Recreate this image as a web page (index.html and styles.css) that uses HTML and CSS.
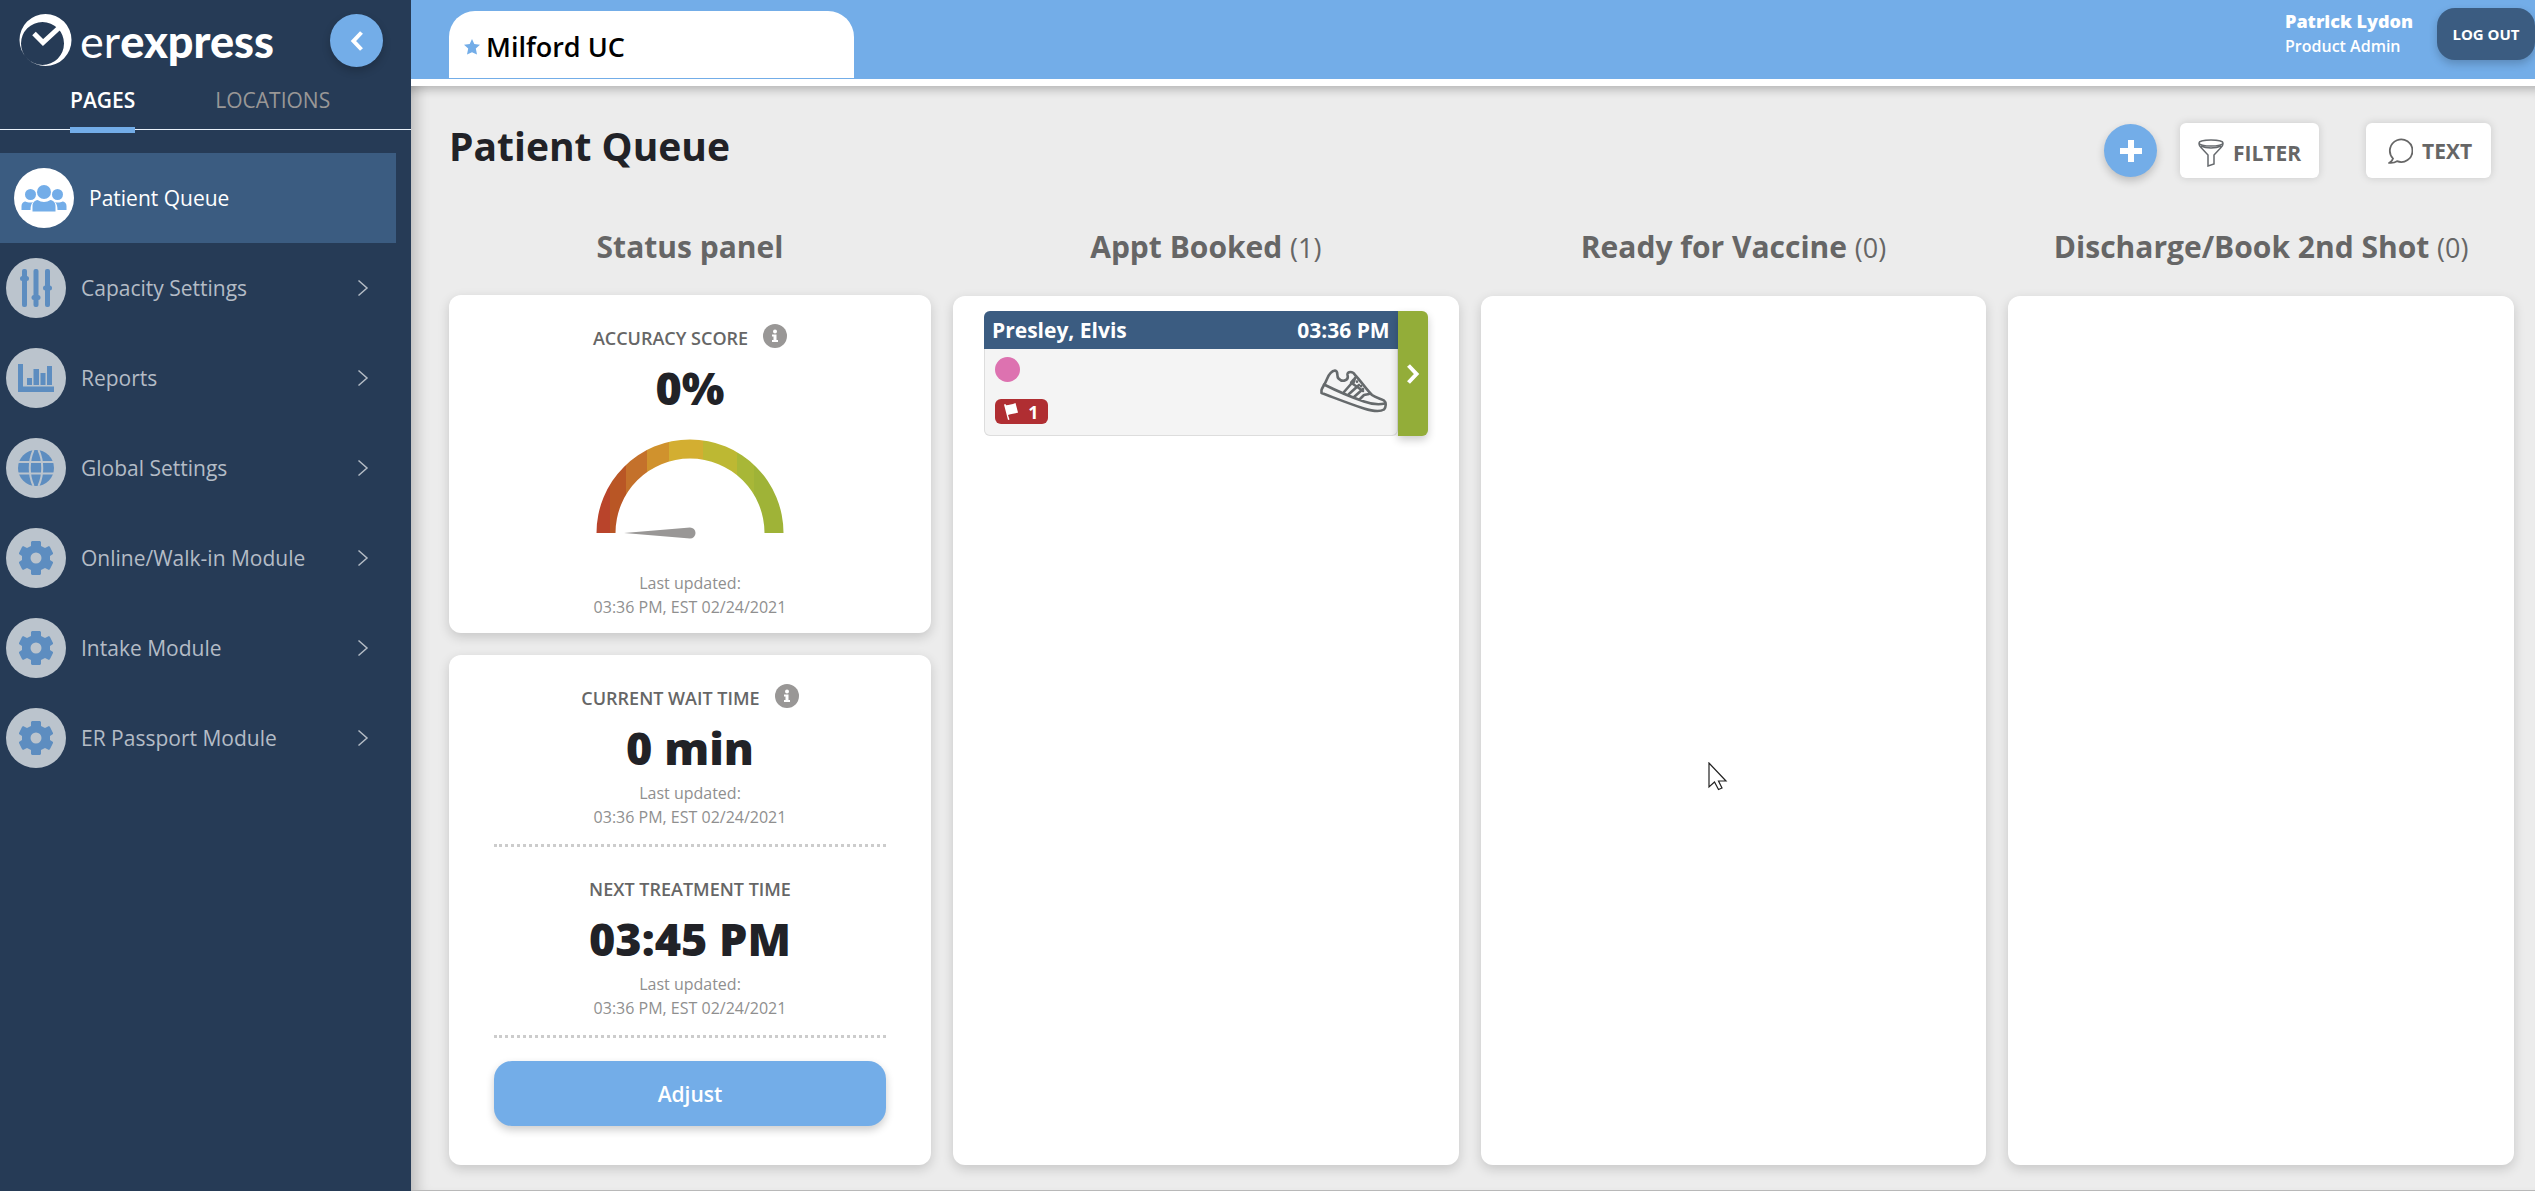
FILE: index.html
```html
<!DOCTYPE html>
<html lang="en">
<head>
<meta charset="utf-8">
<meta name="viewport" content="width=device-width, initial-scale=1">
<title>Patient Queue</title>
<link rel="stylesheet" href="styles.css">
</head>
<body>
<svg class="sprite" aria-hidden="true">
  <symbol id="gear" viewBox="0 0 36 36">
    <path fill-rule="evenodd" d="M14 1h8l1 1v4l4 2 4-2 1 1 3 6v1l-3 2v4l3 2v1l-3 6-1 1-4-2-4 2v4l-1 1h-8l-1-1v-4l-4-2-4 2-1-1-3-6v-1l3-2v-4l-3-2v-1l3-6 1-1 4 2 4-2V2zM18 12.500a5.500 5.500 0 1 0 0 11a5.500 5.500 0 0 0 0-11z"/>
  </symbol>
  <symbol id="chevron" viewBox="0 0 12 18">
    <path d="M1.500 1.500L10 9l-8.500 7.500" fill="none" stroke="currentColor" stroke-width="1.500"/>
  </symbol>
  <symbol id="info" viewBox="0 0 24 24">
    <circle cx="12" cy="12" r="12" fill="#999796"/>
    <circle cx="12" cy="7.500" r="2" fill="#fff"/>
    <path d="M9 10.500h4.500v5.500H15v2H9v-2h1.500v-3.500H9z" fill="#fff"/>
  </symbol>
</svg>

<div class="app">
  <aside class="sidebar">
    <div class="brand">
      <a class="logo" href="#">
        <svg width="53" height="53" viewBox="0 0 53 53">
          <path fill="#fff" fill-rule="evenodd" d="M26.500 0a26 26 0 1 1 0 52a26 26 0 1 1 0-52zM23.500 8a21.500 21.500 0 1 0 0 43a21.500 21.500 0 1 0 0-43z"/>
          <path fill="none" stroke="#fff" stroke-width="5" d="M15 19.500l9 9L42 12"/>
        </svg>
        <span class="logo-text">er<b>express</b></span>
      </a>
      <button class="round-btn" type="button" aria-label="Collapse menu">
        <svg width="14" height="22" viewBox="0 0 14 22"><path d="M11.500 2.500L3.500 11l8 8.500" fill="none" stroke="#fff" stroke-width="4"/></svg>
      </button>
    </div>
    <div class="side-tabs">
      <a class="side-tab current" href="#">PAGES</a>
      <a class="side-tab" href="#">LOCATIONS</a>
    </div>
    <nav class="menu">
      <a class="item active" href="#">
        <span class="disc"><svg width="46" height="28" viewBox="0 0 46 28">
          <circle cx="23" cy="8" r="7"/><circle cx="9.500" cy="10.500" r="5.500"/><circle cx="36.500" cy="10.500" r="5.500"/>
          <path d="M11.500 27.500v-5c0-4 2-6 5-6.500 4 2.500 9 2.500 13 0 3 .5 5 2.500 5 6.500v5zM.5 26v-4c0-3 2-4.500 4-4.500 2 1 5 1.500 7.500.5-1.500 1.500-2.500 4-2.500 8zM45.500 26v-4c0-3-2-4.500-4-4.500-2 1-5 1.500-7.500.5 1.500 1.500 2.500 4 2.500 8z"/>
        </svg></span>
        <span class="label">Patient Queue</span>
      </a>
      <a class="item" href="#">
        <span class="disc"><svg width="32" height="38" viewBox="0 0 32 38">
          <rect x="2" y="0" width="5" height="38" rx="2"/><rect x="13.500" y="0" width="5" height="38" rx="2"/><rect x="25" y="0" width="5" height="38" rx="2"/>
          <rect x="0" y="7" width="9" height="5" rx="2.500"/><rect x="11.500" y="26" width="9" height="5" rx="2.500"/><rect x="23" y="16.500" width="9" height="5" rx="2.500"/>
        </svg></span>
        <span class="label">Capacity Settings</span>
        <svg class="chev" width="12" height="18"><use href="#chevron"/></svg>
      </a>
      <a class="item" href="#">
        <span class="disc"><svg width="36" height="28" viewBox="0 0 36 28">
          <path d="M0 0h5v22.500h31V28H0zM9 14h5v7H9zM15.500 5h5.500v16h-5.500zM22.500 9h5v12h-5zM29 2h5v19h-5z"/>
        </svg></span>
        <span class="label">Reports</span>
        <svg class="chev" width="12" height="18"><use href="#chevron"/></svg>
      </a>
      <a class="item" href="#">
        <span class="disc"><svg width="36" height="36" viewBox="0 0 36 36">
          <circle cx="18" cy="18" r="18"/>
          <path d="M0 12h36M0 23.500h36M15.500 0c-5 11-5 25 0 36M20.500 0c5 11 5 25 0 36" fill="none" stroke="#bbc4cd" stroke-width="2"/>
        </svg></span>
        <span class="label">Global Settings</span>
        <svg class="chev" width="12" height="18"><use href="#chevron"/></svg>
      </a>
      <a class="item" href="#">
        <span class="disc"><svg width="36" height="36"><use href="#gear"/></svg></span>
        <span class="label">Online/Walk-in Module</span>
        <svg class="chev" width="12" height="18"><use href="#chevron"/></svg>
      </a>
      <a class="item" href="#">
        <span class="disc"><svg width="36" height="36"><use href="#gear"/></svg></span>
        <span class="label">Intake Module</span>
        <svg class="chev" width="12" height="18"><use href="#chevron"/></svg>
      </a>
      <a class="item" href="#">
        <span class="disc"><svg width="36" height="36"><use href="#gear"/></svg></span>
        <span class="label">ER Passport Module</span>
        <svg class="chev" width="12" height="18"><use href="#chevron"/></svg>
      </a>
    </nav>
  </aside>

  <div class="content">
    <header class="topbar">
      <a class="loc-tab" href="#">
        <svg width="16" height="16" viewBox="0 0 16 16"><path fill="#73ade8" d="M8 0l2.300 5 5.700.7-4.200 3.800 1.200 6L8 13.200 3 15.500l1.200-6L0 5.700 5.700 5z"/></svg>
        Milford UC
      </a>
      <div class="account">
        <div class="user"><span class="user-name">Patrick Lydon</span><span>Product Admin</span></div>
        <button class="logout" type="button">LOG OUT</button>
      </div>
    </header>

    <main class="main">
      <div class="title-row">
        <h1>Patient Queue</h1>
        <div class="actions">
          <button class="round-btn add" type="button" aria-label="Add patient">
            <svg width="22" height="22" viewBox="0 0 22 22"><path d="M8 0h6v8h8v6h-8v8H8v-8H0V8h8z" fill="#fff"/></svg>
          </button>
          <button class="tool filter" type="button">
            <svg width="26" height="28" viewBox="0 0 26 28" fill="none" stroke="#666a6e" stroke-width="1.500"><ellipse cx="13" cy="4" rx="12" ry="3"/><path d="M1 4.500c0 2 1 3 2 4l7 7.500v11l6-2v-9l7-7.500c1-1 2-2 2-4M3 7c5 2.500 15 2.500 20 0"/></svg>
            FILTER
          </button>
          <button class="tool text" type="button">
            <svg width="25" height="26" viewBox="0 0 25 26" fill="none" stroke="#666" stroke-width="1.800"><path d="M5 20.500A11.300 11.300 0 1 1 9 23.200C7 24.500 4 25 1.500 24.800 3.500 23.500 4.500 22.500 5 20.500z"/></svg>
            TEXT
          </button>
        </div>
      </div>

      <div class="board">
        <section class="col">
          <h2>Status panel</h2>
          <div class="card stat">
            <h3>ACCURACY SCORE <svg width="24" height="24"><use href="#info"/></svg></h3>
            <p class="value">0%</p>
            <svg class="gauge" width="188" height="100" viewBox="0 0 188 100">
              <defs><linearGradient id="scale" gradientUnits="userSpaceOnUse" x1="0" y1="0" x2="188" y2="0">
                <stop offset=".075" stop-color="#b9442b"/><stop offset=".075" stop-color="#b95625"/>
                <stop offset=".16" stop-color="#b95625"/><stop offset=".16" stop-color="#c4712b"/>
                <stop offset=".272" stop-color="#c4712b"/><stop offset=".272" stop-color="#d0922d"/>
                <stop offset=".39" stop-color="#d0922d"/><stop offset=".39" stop-color="#d3ae31"/>
                <stop offset=".57" stop-color="#d3ae31"/><stop offset=".57" stop-color="#bdb833"/>
                <stop offset=".75" stop-color="#bdb833"/><stop offset=".75" stop-color="#a8b737"/>
                <stop offset=".84" stop-color="#a8b737"/><stop offset=".84" stop-color="#9fb337"/>
              </linearGradient></defs>
              <path fill="url(#scale)" d="M.5 94a93.500 93.500 0 0 1 187 0h-19a74.500 74.500 0 0 0-149 0z"/>
              <path fill="#999796" d="M28 94l66-5.500a5.500 5.500 0 0 1 0 11z"/>
            </svg>
            <p class="updated">Last updated:<br>03:36 PM, EST 02/24/2021</p>
          </div>
          <div class="card stat grow">
            <h3>CURRENT WAIT TIME <svg width="24" height="24"><use href="#info"/></svg></h3>
            <p class="value">0 min</p>
            <p class="updated">Last updated:<br>03:36 PM, EST 02/24/2021</p>
            <hr>
            <h3>NEXT TREATMENT TIME</h3>
            <p class="value">03:45 PM</p>
            <p class="updated">Last updated:<br>03:36 PM, EST 02/24/2021</p>
            <hr>
            <button class="adjust" type="button">Adjust</button>
          </div>
        </section>

        <section class="col">
          <h2>Appt Booked <span>(1)</span></h2>
          <div class="card grow lane">
            <article class="patient">
              <div class="patient-info">
                <div class="patient-head"><span>Presley, Elvis</span><span>03:36 PM</span></div>
                <div class="patient-body">
                  <div class="marks">
                    <span class="dot"></span>
                    <span class="flag"><svg width="14" height="17" viewBox="0 0 14 17"><path fill="#fff" d="M0 1.500l1.500-.5.500 1.200C5 2 8 1.500 11.500 0L14 9.500C11 11 7 10.500 4 12l1.500 4.500-1.500.5z"/></svg>1</span>
                  </div>
                  <svg width="68" height="44" viewBox="0 0 68 44" fill="none" stroke="#666a6c" stroke-width="2.600" stroke-linejoin="round" stroke-linecap="round">
                    <path d="M15 1.500C11 2 9 5 7 10 5 15 2 19 1.500 21v3C15 29 30 35 44 39.500c8 2.500 16 3.500 20 1 2-2 2.500-7 0-9-3-2-8-2.500-12-5.500C46 20 40 11 35 6c-2-4-8-4-7.500 0 1.500 5-4.500 8-9 3.500C16 7 19 2 15 1.500z"/>
                    <path d="M4 15.500C17 22 31 28 44 32.500c7 2.500 15 3.500 21 2M35 9c-1 2-4 3-4 6L24 23M39 16l-10 9M43 20l-9 8M49 25l-5 1-4 4M35 9l-2 6 10 7"/>
                    <path d="M37 12.500v.2M41 17v.2"/>
                  </svg>
                </div>
              </div>
              <button class="advance" type="button" aria-label="Move to next stage">
                <svg width="14" height="22" viewBox="0 0 14 22"><path d="M2.500 2.500L10.500 11l-8 8.500" fill="none" stroke="#fff" stroke-width="4"/></svg>
              </button>
            </article>
          </div>
        </section>

        <section class="col">
          <h2>Ready for Vaccine <span>(0)</span></h2>
          <div class="card grow lane">
            <svg class="pointer" width="20" height="29" viewBox="0 0 20 29"><path fill="#fff" stroke="#222" stroke-width="1.200" d="M1 1v24l5.500-5 4 7.500 3.500-1.500-3.500-7H18z"/></svg>
          </div>
        </section>

        <section class="col">
          <h2>Discharge/Book 2nd Shot <span>(0)</span></h2>
          <div class="card grow lane"></div>
        </section>
      </div>
    </main>
  </div>
</div>
</body>
</html>
```
FILE: styles.css
```css
* { box-sizing: border-box; }
body {
  margin: 0;
  font-family: "Open Sans", "Noto Sans", sans-serif;
  font-size: 16px;
  line-height: 24px;
  color: #212227;
  background: #ececec;
}
h1, h2, h3, p { margin: 0; }
a { color: inherit; text-decoration: none; }
button { font-family: inherit; border: 0; padding: 0; cursor: pointer; }
svg { display: block; flex: none; }
.sprite { position: absolute; width: 0; height: 0; }

.app { display: flex; min-height: 100vh; }

/* Sidebar */
.sidebar { flex: none; width: 411px; background: #263b56; color: #fff; }
.brand { display: flex; justify-content: space-between; align-items: center; padding: 14px 28px 13px 19px; }
.logo { display: flex; align-items: center; gap: 8px; }
.logo-text { font-family: Lato, sans-serif; font-weight: 400; font-size: 45px; line-height: 52px; }
.logo-text b { font-weight: 900; }
.round-btn {
  display: flex; align-items: center; justify-content: center;
  width: 53px; height: 53px; border-radius: 50%;
  background: #73ade8; box-shadow: 0 4px 8px rgba(0, 0, 0, .2);
}
.side-tabs { display: flex; gap: 80px; padding: 0 70px; border-bottom: 1px solid #e9f1fa; }
.side-tab { height: 49px; margin-bottom: -4px; padding-top: 6px; font-size: 21px; line-height: 28px; font-weight: 500; color: #999796; }
.side-tab.current { height: 53px; border-bottom: 6px solid #73ade8; color: #fff; font-weight: 600; }
.menu { padding: 23px 15px 0 0; }
.item { display: flex; align-items: center; gap: 15px; height: 90px; padding: 0 27px 0 6px; font-size: 21px; line-height: 28px; color: #b4bcc6; }
.item.active { padding-left: 14px; background: #3b5c81; color: #fff; }
.disc { flex: none; display: flex; align-items: center; justify-content: center; width: 60px; height: 60px; border-radius: 50%; background: #bbc4cd; fill: #5d8dc0; }
.active .disc { background: #fff; fill: #73ade8; }
.label { flex: 1; }

/* Top bar */
.content { flex: 1; min-width: 0; display: flex; flex-direction: column; }
.topbar { display: flex; justify-content: space-between; align-items: flex-start; height: 86px; padding-left: 38px; background: #73ade8; border-bottom: 7px solid #fff; }
.loc-tab {
  display: flex; align-items: center; gap: 6px;
  width: 405px; height: 67px; margin-top: 11px; padding: 4px 0 0 15px;
  border-radius: 26px 26px 0 0; background: #fff; color: #000;
  font-size: 27px; line-height: 36px; font-weight: 600;
}
.account { display: flex; gap: 24px; padding-top: 8px; }
.user { display: flex; flex-direction: column; padding-top: 1px; color: #fff; font-size: 16px; line-height: 25px; font-weight: 600; }
.user-name { font-size: 18px; font-weight: 800; }
.logout { width: 98px; height: 52px; border-radius: 18px; background: #3b5c81; color: #fff; font-size: 15px; font-weight: 700; box-shadow: 0 4px 8px rgba(0, 0, 0, .2); }

/* Main area */
.main {
  flex: 1; display: flex; flex-direction: column;
  padding: 37px 21px 25px 38px;
  border-bottom: 1px solid #b8b8b8;
  box-shadow: inset 0 12px 10px -8px rgba(0, 0, 0, .22), inset 16px 0 14px -10px rgba(0, 0, 0, .2);
}
.title-row { display: flex; justify-content: space-between; align-items: flex-start; }
h1 { font-size: 39px; line-height: 46px; font-weight: 700; }
.actions { display: flex; align-items: center; padding-right: 23px; }
.add { margin-right: 23px; }
.tool { display: flex; align-items: center; height: 55px; border-radius: 6px; background: #fff; color: #666; font-size: 21px; font-weight: 700; box-shadow: 0 0 8px rgba(0, 0, 0, .15); }
.filter { width: 139px; margin-right: 47px; padding: 4px 0 0 18px; gap: 9px; }
.text { width: 125px; padding-left: 22px; gap: 9px; }

/* Board */
.board { flex: 1; display: grid; grid-template-columns: 482px repeat(3, minmax(0, 1fr)); gap: 22px; padding-top: 48px; }
.col { display: flex; flex-direction: column; }
h2 { margin-bottom: 27px; font-size: 30px; line-height: 42px; font-weight: 700; text-align: center; color: #666; }
h2 span { font-size: 27px; font-weight: 400; }
.card { border-radius: 12px; background: #fff; box-shadow: 0 4px 12px rgba(0, 0, 0, .16); }
.card + .card { margin-top: 22px; }
.grow { flex: 1; }
.stat { padding: 29px 45px 14px; text-align: center; }
.stat.grow { padding-bottom: 39px; }
h3 { display: flex; justify-content: center; gap: 15px; font-size: 18px; line-height: 28px; font-weight: 600; color: #666; }
.value { margin: 6px 0 3px; font-size: 45px; line-height: 60px; font-weight: 800; }
.gauge { margin: 21px auto 32px; }
.updated { color: #8f8f8f; }
hr { margin: 15px 0 28px; border: 0; border-top: 3px dotted #ccc; }
.adjust { display: block; width: 100%; height: 65px; margin-top: -5px; border-radius: 18px; background: #73ade8; color: #fff; font-size: 21px; font-weight: 600; box-shadow: 0 4px 8px rgba(0, 0, 0, .2); }

/* Patient lanes */
.lane { position: relative; padding: 15px 31px; }
.patient { display: flex; height: 125px; }
.patient-info { flex: 1; display: flex; flex-direction: column; border-radius: 6px 0 0 6px; background: #f4f4f4; }
.patient-head { display: flex; justify-content: space-between; align-items: center; height: 38px; padding: 0 8px; border-radius: 6px 0 0 0; background: #3b5c81; color: #fff; font-size: 21px; font-weight: 700; }
.patient-body { flex: 1; display: flex; justify-content: space-between; align-items: center; padding: 0 9px 3px 10px; border: 1px solid #ddd; border-top: 0; border-radius: 0 0 6px 6px; }
.marks { display: flex; flex-direction: column; gap: 17px; }
.dot { width: 25px; height: 25px; border-radius: 50%; background: #dd72b0; }
.flag { display: flex; align-items: center; justify-content: center; gap: 10px; width: 53px; height: 25px; border-radius: 6px; background: #b02e32; color: #fff; font-size: 18px; font-weight: 700; }
.advance { display: flex; align-items: center; justify-content: center; width: 30px; border-radius: 0 6px 6px 0; background: #93ad39; box-shadow: 0 4px 8px rgba(0, 0, 0, .2); }
.pointer { position: absolute; left: 45%; top: 466px; }
```
